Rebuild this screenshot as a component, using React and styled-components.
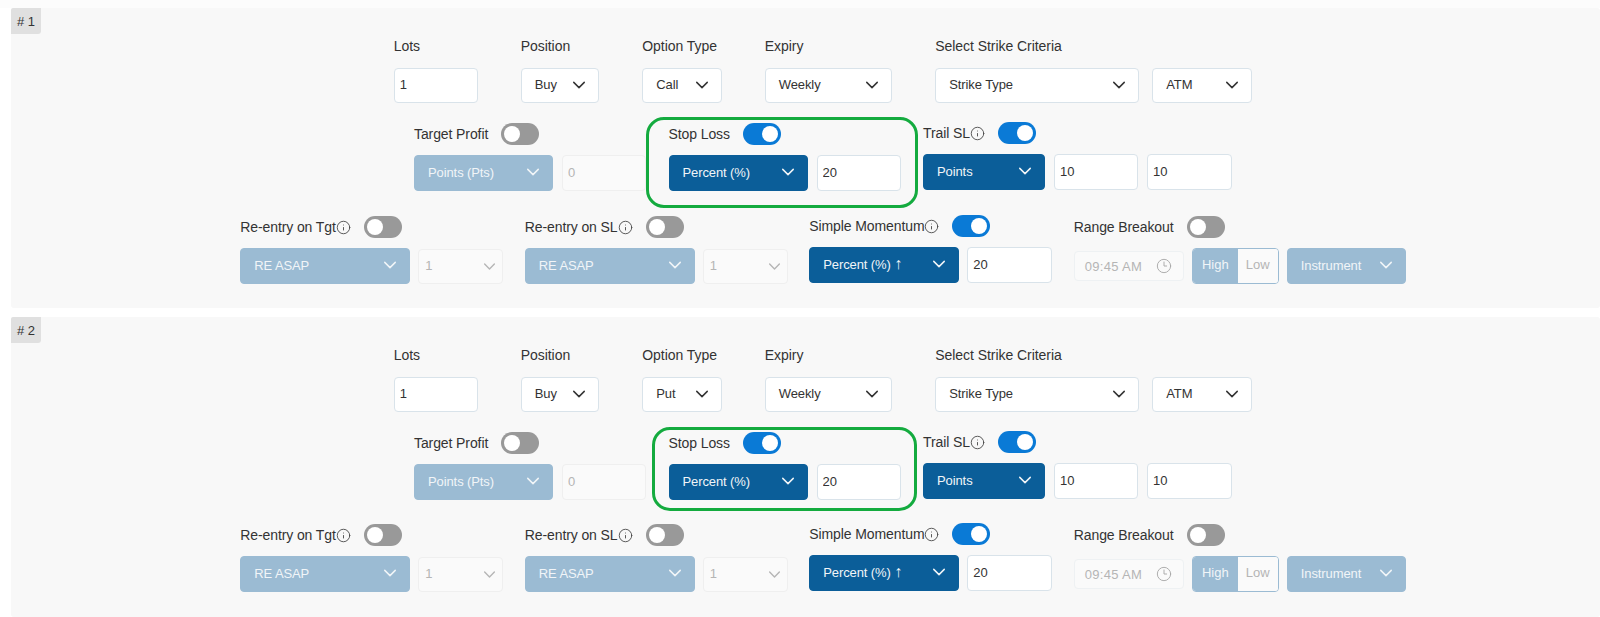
import React from 'react';
import styled, { createGlobalStyle } from 'styled-components';
import { Info, Clock3 } from 'lucide-react';

const GlobalStyle = createGlobalStyle`
	html, body {
		margin: 0;
		padding: 0;
		background: #fff;
	}
	* {
		box-sizing: border-box;
	}
`;

const Page = styled.div`
	width: 1600px;
	height: 617px;
	overflow: hidden;
	border-top: 8px solid #fcfcfc;
	font-family: "Liberation Sans", Arial, sans-serif;
	color: #333;
`;

const Panel = styled.section`
	position: relative;
	height: 300px;
	margin: 0 0 9px 11px;
	padding: 30px 0 0 35px;
	background: #f8f8f8;
	border-radius: 3px;
	display: flex;
	flex-direction: column;
	align-items: center;
`;

const Badge = styled.div`
	position: absolute;
	top: 0;
	left: 0;
	width: 30px;
	height: 26px;
	padding-left: 6px;
	line-height: 27px;
	font-size: 13px;
	color: #333;
	background: #e0e0e0;
	border-radius: 2px 0 3px 0;
`;

const Row = styled.div`
	display: flex;
	align-items: flex-start;
	gap: ${p => p.$gap}px;
	margin-top: ${p => p.$top || 0}px;
`;

const Field = styled.div`
	position: relative;
	display: flex;
	flex-direction: column;
	margin-top: ${p => (p.$lift ? -1 : 0)}px;
`;

const FieldLabel = styled.div`
	height: 16px;
	margin-bottom: 14px;
	font-size: 14px;
	line-height: 16px;
	letter-spacing: -0.05px;
`;

const ToggleHeader = styled.div`
	display: flex;
	align-items: center;
	height: 22px;
	margin-bottom: 10px;
	font-size: 14px;
	letter-spacing: -0.1px;
`;

const InfoIcon = styled(Info)`
	width: 15px;
	height: 15px;
	flex: none;
	color: #444;
`;

const Switch = styled.span`
	position: relative;
	width: 38px;
	height: 22px;
	margin-left: 13px;
	flex: none;
	border-radius: 11px;
	background: ${p => (p.$on ? '#0a7ad6' : '#999')};

	&::after {
		content: "";
		position: absolute;
		top: 3px;
		left: ${p => (p.$on ? '19px' : '3px')};
		width: 16px;
		height: 16px;
		border-radius: 50%;
		background: #fff;
	}
`;

const Controls = styled.div`
	display: flex;
	align-items: center;
	gap: ${p => p.$gap || 9}px;
`;

const Select = styled.div`
	display: flex;
	align-items: center;
	justify-content: space-between;
	width: ${p => p.$w}px;
	height: ${p => p.$h || 36}px;
	padding: 0 12px 2px 13px;
	font-size: 13px;
	letter-spacing: -0.1px;
	border-radius: 4px;
	white-space: nowrap;
	background: ${p => (p.$tone === 'solid' ? '#0b5e99' : p.$tone === 'muted' ? '#9bbbd3' : '#fff')};
	color: ${p => (p.$tone ? '#f1f5f8' : '#333')};
	border: 1px solid ${p => (p.$tone === 'solid' ? '#0b5e99' : p.$tone === 'muted' ? '#9bbbd3' : '#d9e3ea')};
`;

const Chevron = styled.svg`
	width: 14px;
	height: 14px;
	flex: none;
	fill: none;
	stroke: currentColor;
	stroke-width: 1.7;
	stroke-linecap: round;
	stroke-linejoin: round;
`;

const UpArrow = styled.span`
	font-size: 16px;
	line-height: 1;
`;

const TextBox = styled.input`
	width: ${p => p.$w || 84}px;
	height: ${p => p.$h || 36}px;
	padding: 0 4px 2px 5px;
	font: 13px "Liberation Sans", Arial, sans-serif;
	color: #333;
	background: #fff;
	border: 1px solid #d9e3ea;
	border-radius: 4px;
	outline: none;

	&:disabled {
		color: #b5b5b5;
		background: #fafafa;
		border-color: #efefef;
	}
`;

const SmallSelect = styled.div`
	display: flex;
	align-items: center;
	justify-content: space-between;
	width: 85px;
	height: 35px;
	padding: 0 6px 2px;
	font-size: 13px;
	color: #b5b5b5;
	background: #fafafa;
	border: 1px solid #efefef;
	border-radius: 4px;

	svg {
		width: 13px;
		height: 13px;
		margin-top: 2px;
	}
`;

const TimeBox = styled.div`
	display: flex;
	align-items: center;
	justify-content: space-between;
	width: 110px;
	height: 30px;
	padding: 0 11px 0 10px;
	font-size: 13px;
	letter-spacing: 0.3px;
	color: #b5b5b5;
	background: #fafafa;
	border: 1px solid #eef1f3;
	border-radius: 4px;
`;

const ClockIcon = styled(Clock3)`
	width: 16px;
	height: 16px;
	flex: none;
	color: #a8a8a8;
`;

const Segment = styled.div`
	display: flex;
	width: 87px;
	height: 36px;
	font-size: 13px;
	line-height: 32px;
	text-align: center;
	border: 1px solid #9bbbd3;
	border-radius: 4px;
	overflow: hidden;
`;

const SegmentPart = styled.span`
	flex: ${p => (p.$active ? '0 0 45px' : '1')};
	color: ${p => (p.$active ? '#f1f5f8' : '#b5b5b5')};
	background: ${p => (p.$active ? '#9bbbd3' : '#fafafa')};
`;

const Highlight = styled.div`
	position: absolute;
	top: ${p => p.$box.top}px;
	right: ${p => p.$box.right}px;
	bottom: ${p => p.$box.bottom}px;
	left: ${p => p.$box.left}px;
	border: 3px solid #14ab3f;
	border-radius: 18px;
	pointer-events: none;
`;

const Arrow = () => (
	<Chevron viewBox="0 0 16 16"><path d="m2 5 6 6 6-6" /></Chevron>
);

const Dropdown = ({ children, ...rest }) => (
	<Select {...rest}>
		<span>{children}</span>
		<Arrow />
	</Select>
);

const Heading = ({ label, info, on }) => (
	<ToggleHeader>
		{label}
		{info && <InfoIcon strokeWidth={1.4} />}
		<Switch $on={on} />
	</ToggleHeader>
);

const Reentry = ({ label }) => (
	<Field>
		<Heading label={label} info />
		<Controls $gap={8}>
			<Dropdown $w={170} $tone="muted">RE ASAP</Dropdown>
			<SmallSelect>1<Arrow /></SmallSelect>
		</Controls>
	</Field>
);

const legs = [
	{ id: 1, option: 'Call', box: { top: -6, right: -17, bottom: -17, left: -23 }, lastTop: 25 },
	{ id: 2, option: 'Put', box: { top: -5, right: -16, bottom: -11, left: -17 }, lastTop: 24 },
];

const Leg = ({ leg }) => (
	<Panel>
		<Badge># {leg.id}</Badge>

		<Row $gap={43}>
			<Field>
				<FieldLabel>Lots</FieldLabel>
				<TextBox defaultValue="1" readOnly $h={35} />
			</Field>
			<Field>
				<FieldLabel>Position</FieldLabel>
				<Dropdown $w={78.5} $h={35}>Buy</Dropdown>
			</Field>
			<Field>
				<FieldLabel>Option Type</FieldLabel>
				<Dropdown $w={79.5} $h={35}>{leg.option}</Dropdown>
			</Field>
			<Field>
				<FieldLabel>Expiry</FieldLabel>
				<Dropdown $w={127.5} $h={35}>Weekly</Dropdown>
			</Field>
			<Field>
				<FieldLabel>Select Strike Criteria</FieldLabel>
				<Controls $gap={13}>
					<Dropdown $w={204} $h={35}>Strike Type</Dropdown>
					<Dropdown $w={100} $h={35}>ATM</Dropdown>
				</Controls>
			</Field>
		</Row>

		<Row $gap={22.5} $top={20}>
			<Field>
				<Heading label="Target Profit" />
				<Controls>
					<Dropdown $w={139} $tone="muted">Points (Pts)</Dropdown>
					<TextBox defaultValue="0" disabled />
				</Controls>
			</Field>
			<Field>
				<Heading label="Stop Loss" on />
				<Controls>
					<Dropdown $w={139} $tone="solid">Percent (%)</Dropdown>
					<TextBox defaultValue="20" readOnly />
				</Controls>
				<Highlight $box={leg.box} />
			</Field>
			<Field $lift>
				<Heading label="Trail SL" info on />
				<Controls>
					<Dropdown $w={122} $tone="solid">Points</Dropdown>
					<TextBox defaultValue="10" readOnly />
					<TextBox defaultValue="10" readOnly $w={85} />
				</Controls>
			</Field>
		</Row>

		<Row $gap={21.5} $top={leg.lastTop}>
			<Reentry label="Re-entry on Tgt" />
			<Reentry label="Re-entry on SL" />
			<Field $lift>
				<Heading label="Simple Momentum" info on />
				<Controls $gap={8}>
					<Dropdown $w={150} $tone="solid">Percent (%) <UpArrow>↑</UpArrow></Dropdown>
					<TextBox defaultValue="20" readOnly $w={85} />
				</Controls>
			</Field>
			<Field>
				<Heading label="Range Breakout" />
				<Controls $gap={8}>
					<TimeBox>09:45 AM<ClockIcon strokeWidth={1.4} /></TimeBox>
					<Segment>
						<SegmentPart $active>High</SegmentPart>
						<SegmentPart>Low</SegmentPart>
					</Segment>
					<Dropdown $w={119} $tone="muted">Instrument</Dropdown>
				</Controls>
			</Field>
		</Row>
	</Panel>
);

export default function App() {
	return (
		<Page>
			<GlobalStyle />
			{legs.map(leg => <Leg key={leg.id} leg={leg} />)}
		</Page>
	);
}
